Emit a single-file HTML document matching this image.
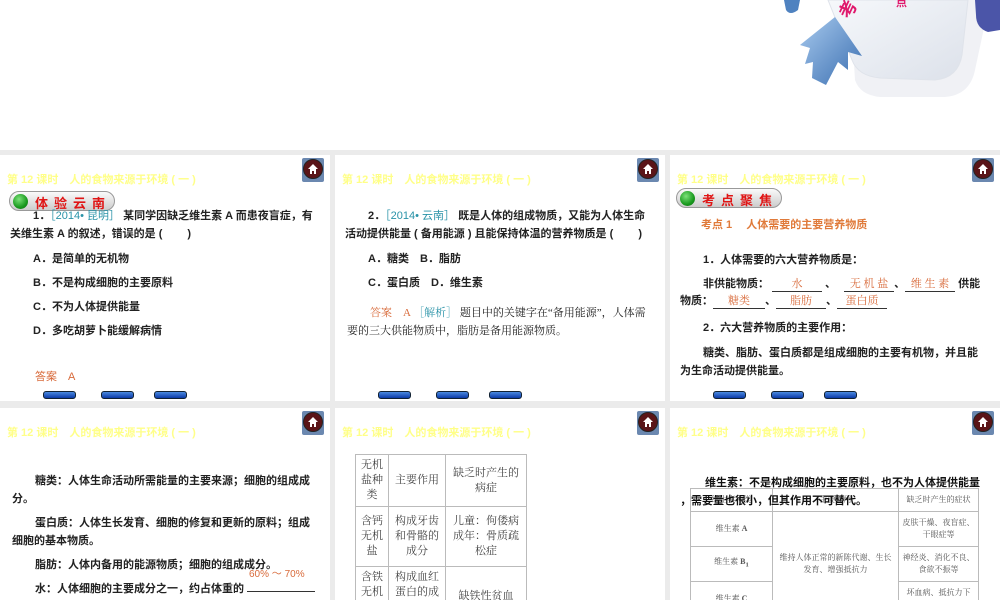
<!DOCTYPE html>
<html><head><meta charset="utf-8"><style>
*{margin:0;padding:0;box-sizing:border-box}
body{width:1000px;height:600px;overflow:hidden;background:#ebebeb;position:relative;font-family:"Liberation Serif","Noto Serif CJK SC","Noto Sans CJK SC",serif;color:#222}
.top{position:absolute;left:0;top:0;width:1000px;height:150px;background:#fff}
.p{position:absolute;background:#fff;overflow:hidden}
.hd{position:absolute;left:7px;top:16px;font:bold 11px "Liberation Sans","Noto Sans CJK SC",sans-serif;color:#ffff88;white-space:nowrap}
.home{position:absolute;right:6px;top:3px;width:22px;height:24px;background:#6b88b0;border-radius:2px}
.home i{position:absolute;left:1px;top:1px;width:20px;height:20px;border-radius:50%;background:#5a1418;border:1px solid #222}
.home svg{position:absolute;left:5px;top:5px}
.t{position:absolute;font-size:11px;white-space:nowrap;font-weight:bold;font-family:"Liberation Sans","Noto Sans CJK SC",sans-serif}
.n{font-weight:normal;font-family:"Liberation Serif","Noto Serif CJK SC",serif}
.bl{color:#2a93a8;font-weight:normal}
.or{color:#d86a3a;font-weight:normal}
.badge{position:absolute;width:106px;height:20px;border-radius:10px;background:linear-gradient(#fafafa,#ccc);border:1px solid #999;}
.badge b{position:absolute;left:3px;top:2px;width:15px;height:15px;border-radius:50%;background:radial-gradient(circle at 40% 35%,#7de27a,#1a9a1f 60%,#0b6a10)}
.badge span{position:absolute;left:25px;top:1px;font:bold 13px "Noto Sans CJK SC",sans-serif;color:#e01515;letter-spacing:6px}
.nav{position:absolute;top:236px;width:33px;height:8px;border-radius:3px;background:linear-gradient(#4a8ae0,#0b3aa8);border:1px solid #123}
table{position:absolute;border-collapse:collapse;font-family:"Liberation Serif","Noto Serif CJK SC",serif;color:#444}
td{border:1px solid #bbb;text-align:center;vertical-align:middle}
.u{display:inline-block;border-bottom:1px solid #333;text-align:center;color:#d86a3a;font-weight:normal;font-family:"Liberation Serif","Noto Serif CJK SC",serif}
</style></head><body>
<div class="top">
<svg width="1000" height="150" style="position:absolute;left:0;top:0">
<defs><linearGradient id="ar" x1="0" y1="0" x2="1" y2="1"><stop offset="0" stop-color="#a8caee"/><stop offset="1" stop-color="#3a6eb0"/></linearGradient>
<linearGradient id="cd" x1="0" y1="0" x2="1" y2="1"><stop offset="0" stop-color="#f6f8fb"/><stop offset="1" stop-color="#dce1ea"/></linearGradient></defs>
<path d="M850,0 L990,0 L975,70 Q970,95 945,97 L880,97 Q860,95 855,80 Z" fill="#eceef2" opacity="0.8"/>
<path d="M828,0 L968,0 L962,55 Q958,78 935,80 L880,78 Q858,76 852,60 Z" fill="url(#cd)" stroke="#dfe3ea"/>
<path d="M975,0 L1000,0 L1000,30 L988,32 Q976,28 976,15Z" fill="#4b55a8"/>
<path d="M784,0 L800,0 L798,10 Q790,16 786,10Z" fill="#4f82c0"/>
<path d="M800,45 L835,17 L862,56 L848,52 L848,70 L838,62 L826,85 L812,78 L813,62 L805,64 L810,48Z" fill="url(#ar)"/>
<text x="850" y="20" font-family="Noto Sans CJK SC" font-weight="bold" font-size="18" fill="#e0186c" transform="rotate(-65 850 20)">考</text>
<text x="896" y="6" font-family="Noto Sans CJK SC" font-weight="bold" font-size="11" fill="#e0186c">点</text>
</svg>
</div>

<!-- Panel 1 -->
<div class="p" style="left:0;top:155px;width:330px;height:246px">
<div class="hd">第 12 课时　人的食物来源于环境 ( 一 )</div>
<div class="home"><i></i><svg width="12" height="12" viewBox="0 0 12 12"><path d="M6 1L1 6H3V11H5V8H7V11H9V6H11Z" fill="#fff"/></svg></div>
<div class="badge" style="left:9px;top:36px"><b></b><span>体验云南</span></div>
<div class="t" style="left:33px;top:52px">1．<span class="bl">［2014• 昆明］</span> 某同学因缺乏维生素 A 而患夜盲症，有</div>
<div class="t" style="left:10px;top:70px">关维生素 A 的叙述，错误的是 (　　 )</div>
<div class="t" style="left:33px;top:95px">A．是简单的无机物</div>
<div class="t" style="left:33px;top:119px">B．不是构成细胞的主要原料</div>
<div class="t" style="left:33px;top:143px">C．不为人体提供能量</div>
<div class="t" style="left:33px;top:167px">D．多吃胡萝卜能缓解病情</div>
<div class="t or" style="left:35px;top:213px">答案　A</div>
<div class="nav" style="left:43px"></div><div class="nav" style="left:101px"></div><div class="nav" style="left:154px"></div>
</div>

<!-- Panel 2 -->
<div class="p" style="left:335px;top:155px;width:330px;height:246px">
<div class="hd">第 12 课时　人的食物来源于环境 ( 一 )</div>
<div class="home"><i></i><svg width="12" height="12" viewBox="0 0 12 12"><path d="M6 1L1 6H3V11H5V8H7V11H9V6H11Z" fill="#fff"/></svg></div>
<div class="t" style="left:33px;top:52px">2．<span class="bl">［2014• 云南］</span> 既是人体的组成物质，又能为人体生命</div>
<div class="t" style="left:10px;top:70px">活动提供能量 ( 备用能源 ) 且能保持体温的营养物质是 (　　 )</div>
<div class="t" style="left:33px;top:95px">A．糖类　B．脂肪</div>
<div class="t" style="left:33px;top:119px">C．蛋白质　D．维生素</div>
<div class="t n" style="left:35px;top:149px"><span class="or">答案　A</span> <span class="bl">［解析］</span> 题目中的关键字在“备用能源”，人体需</div>
<div class="t n" style="left:12px;top:167px">要的三大供能物质中，脂肪是备用能源物质。</div>
<div class="nav" style="left:43px"></div><div class="nav" style="left:101px"></div><div class="nav" style="left:154px"></div>
</div>

<!-- Panel 3 -->
<div class="p" style="left:670px;top:155px;width:330px;height:246px">
<div class="hd">第 12 课时　人的食物来源于环境 ( 一 )</div>
<div class="home"><i></i><svg width="12" height="12" viewBox="0 0 12 12"><path d="M6 1L1 6H3V11H5V8H7V11H9V6H11Z" fill="#fff"/></svg></div>
<div class="badge" style="left:6px;top:33px"><b></b><span>考点聚焦</span></div>
<div class="t" style="left:31px;top:61px;color:#e07a3a">考点 1　 人体需要的主要营养物质</div>
<div class="t" style="left:33px;top:96px">1．人体需要的六大营养物质是：</div>
<div class="t" style="left:33px;top:120px">非供能物质：<span class="u" style="width:50px;margin-left:3px">水</span> 、<span class="u" style="width:50px;margin-left:8px">无 机 盐</span>、<span class="u" style="width:50px">维 生 素</span> 供能</div>
<div class="t" style="left:10px;top:137px">物质：<span class="u" style="width:52px">糖类</span>、<span class="u" style="width:50px">脂肪</span>、<span class="u" style="width:50px">蛋白质</span></div>
<div class="t" style="left:33px;top:164px">2．六大营养物质的主要作用：</div>
<div class="t" style="left:33px;top:189px">糖类、脂肪、蛋白质都是组成细胞的主要有机物，并且能</div>
<div class="t" style="left:10px;top:207px">为生命活动提供能量。</div>
<div class="nav" style="left:43px"></div><div class="nav" style="left:101px"></div><div class="nav" style="left:154px"></div>
</div>

<!-- Panel 4 -->
<div class="p" style="left:0;top:408px;width:330px;height:192px">
<div class="hd">第 12 课时　人的食物来源于环境 ( 一 )</div>
<div class="home"><i></i><svg width="12" height="12" viewBox="0 0 12 12"><path d="M6 1L1 6H3V11H5V8H7V11H9V6H11Z" fill="#fff"/></svg></div>
<div class="t" style="left:35px;top:64px">糖类：人体生命活动所需能量的主要来源；细胞的组成成</div>
<div class="t" style="left:12px;top:82px">分。</div>
<div class="t" style="left:35px;top:106px">蛋白质：人体生长发育、细胞的修复和更新的原料；组成</div>
<div class="t" style="left:12px;top:124px">细胞的基本物质。</div>
<div class="t" style="left:35px;top:148px">脂肪：人体内备用的能源物质；细胞的组成成分。</div>
<div class="t or" style="left:249px;top:157px;font-size:10px">60% ～ 70%</div>
<div class="t" style="left:35px;top:172px">水：人体细胞的主要成分之一，约占体重的 <span style="display:inline-block;width:68px;border-bottom:1px solid #333"></span></div>
</div>

<!-- Panel 5 -->
<div class="p" style="left:335px;top:408px;width:330px;height:192px">
<div class="hd">第 12 课时　人的食物来源于环境 ( 一 )</div>
<div class="home"><i></i><svg width="12" height="12" viewBox="0 0 12 12"><path d="M6 1L1 6H3V11H5V8H7V11H9V6H11Z" fill="#fff"/></svg></div>
<table style="left:20px;top:46px;font-size:11px;line-height:15px">
<tr style="height:52px"><td style="width:33px">无机<br>盐种<br>类</td><td style="width:57px">主要作用</td><td style="width:81px">缺乏时产生的<br>病症</td></tr>
<tr style="height:60px"><td>含钙<br>无机<br>盐</td><td>构成牙齿<br>和骨骼的<br>成分</td><td>儿童：佝偻病<br>成年：骨质疏<br>松症</td></tr>
<tr style="height:60px;vertical-align:top"><td style="vertical-align:top;padding-top:3px">含铁<br>无机<br>盐</td><td style="vertical-align:top;padding-top:3px">构成血红<br>蛋白的成<br>分</td><td>缺铁性贫血</td></tr>
</table>
</div>

<!-- Panel 6 -->
<div class="p" style="left:670px;top:408px;width:330px;height:192px">
<div class="hd">第 12 课时　人的食物来源于环境 ( 一 )</div>
<div class="home"><i></i><svg width="12" height="12" viewBox="0 0 12 12"><path d="M6 1L1 6H3V11H5V8H7V11H9V6H11Z" fill="#fff"/></svg></div>
<table style="left:20px;top:80px;font-size:8px;line-height:12px;color:#555">
<tr style="height:23px"><td style="width:82px">维生素种类</td><td style="width:126px">主要作用</td><td style="width:80px">缺乏时产生的症状</td></tr>
<tr style="height:35px"><td>维生素 <b>A</b></td><td rowspan="3">维持人体正常的新陈代谢、生长<br>发育、增强抵抗力</td><td>皮肤干燥、夜盲症、<br>干眼症等</td></tr>
<tr style="height:35px"><td>维生素 <b>B<sub>1</sub></b></td><td>神经炎、消化不良、<br>食欲不振等</td></tr>
<tr style="height:35px"><td>维生素 <b>C</b></td><td>坏血病、抵抗力下<br>降等</td></tr>
</table>
<div class="t" style="left:35px;top:66px;font-size:11px;color:#111">维生素：不是构成细胞的主要原料，也不为人体提供能量</div>
<div class="t" style="left:10px;top:84px;font-size:11px;color:#111">，需要量也很小，但其作用不可替代。</div>
</div>
</body></html>
